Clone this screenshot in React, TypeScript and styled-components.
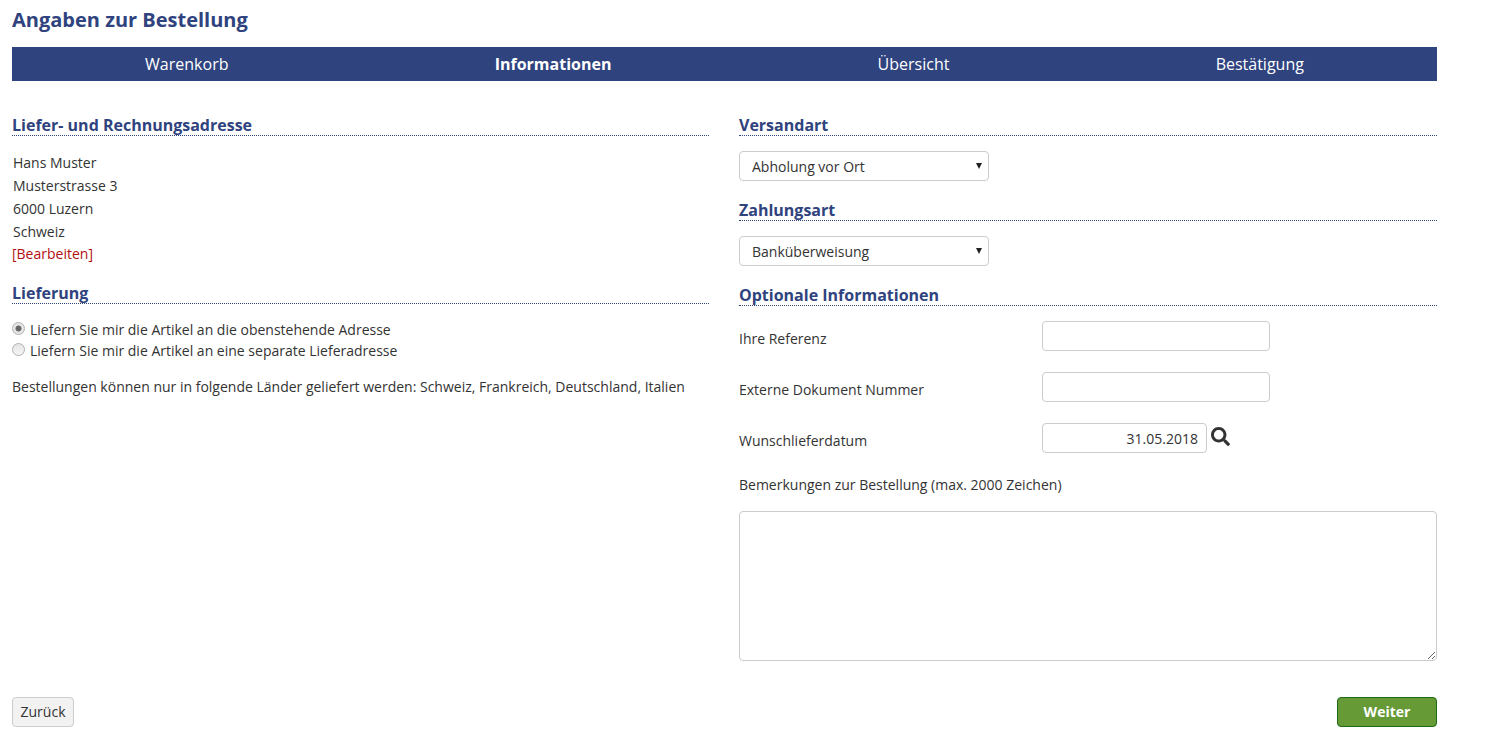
import styled, { createGlobalStyle } from 'styled-components'
import { FaSearch } from 'react-icons/fa'

const GlobalStyle = createGlobalStyle`
    html, body {
        margin: 0;
        padding: 0;
        background: #fff;
    }
    body {
        font-family: "Open Sans", "Liberation Sans", sans-serif;
        font-size: 14px;
        color: #333;
    }
    * {
        box-sizing: border-box;
    }
`

const steps = [
    { label: 'Warenkorb', active: false },
    { label: 'Informationen', active: true },
    { label: 'Übersicht', active: false },
    { label: 'Bestätigung', active: false },
]

function App() {
    return (
        <Page>
            <GlobalStyle />
            <Title>Angaben zur Bestellung</Title>
            <StepBar>
                {steps.map((s) => (
                    <Step key={s.label} $active={s.active}>{s.label}</Step>
                ))}
            </StepBar>
            <Columns>
                <Column>
                    <Heading>Liefer- und Rechnungsadresse</Heading>
                    <Address>
                        <AddressLine>Hans Muster</AddressLine>
                        <AddressLine>Musterstrasse 3</AddressLine>
                        <AddressLine>6000 Luzern</AddressLine>
                        <AddressLine>Schweiz</AddressLine>
                        <EditLink>[Bearbeiten]</EditLink>
                    </Address>
                    <Heading>Lieferung</Heading>
                    <RadioGroup>
                        <RadioRow>
                            <Radio type="radio" name="lieferung" defaultChecked />
                            Liefern Sie mir die Artikel an die obenstehende Adresse
                        </RadioRow>
                        <RadioRow>
                            <Radio type="radio" name="lieferung" />
                            Liefern Sie mir die Artikel an eine separate Lieferadresse
                        </RadioRow>
                    </RadioGroup>
                    <Note>Bestellungen können nur in folgende Länder geliefert werden: Schweiz, Frankreich, Deutschland, Italien</Note>
                </Column>
                <Column>
                    <Heading>Versandart</Heading>
                    <SelectBox>
                        <Select defaultValue="Abholung vor Ort">
                            <option>Abholung vor Ort</option>
                        </Select>
                    </SelectBox>
                    <Heading>Zahlungsart</Heading>
                    <SelectBox>
                        <Select defaultValue="Banküberweisung">
                            <option>Banküberweisung</option>
                        </Select>
                    </SelectBox>
                    <Heading>Optionale Informationen</Heading>
                    <FormRows>
                        <FormRow>
                            <FieldLabel>Ihre Referenz</FieldLabel>
                            <TextInput />
                        </FormRow>
                        <FormRow>
                            <FieldLabel>Externe Dokument Nummer</FieldLabel>
                            <TextInput />
                        </FormRow>
                        <FormRow>
                            <FieldLabel>Wunschlieferdatum</FieldLabel>
                            <DateInput defaultValue="31.05.2018" />
                            <SearchIcon><FaSearch size={19} /></SearchIcon>
                        </FormRow>
                    </FormRows>
                    <RemarkLabel>Bemerkungen zur Bestellung (max. 2000 Zeichen)</RemarkLabel>
                    <Remarks />
                </Column>
            </Columns>
            <Footer>
                <BackButton>Zurück</BackButton>
                <NextButton>Weiter</NextButton>
            </Footer>
        </Page>
    )
}

const Page = styled.div`
    width: 1437px;
    padding-left: 12px;
`
const Title = styled.h1`
    margin: 0;
    height: 47px;
    padding-top: 6px;
    font-size: 20px;
    line-height: 28px;
    font-weight: 700;
    color: #2f437e;
`
const StepBar = styled.nav`
    display: flex;
    height: 34px;
    background: #2f437e;
`
const Step = styled.div<{ $active: boolean }>`
    flex: 1 1 auto;
    text-align: center;
    color: #fff;
    font-size: 16px;
    line-height: 34px;
    font-weight: ${(p) => (p.$active ? 700 : 400)};
`
const Columns = styled.div`
    display: grid;
    grid-template-columns: 697px 698px;
    column-gap: 30px;
    padding-top: 33px;
`
const Column = styled.section`
    display: flex;
    flex-direction: column;
    align-items: flex-start;
`
const Heading = styled.h2`
    align-self: stretch;
    margin: 0;
    height: 22px;
    font-size: 16px;
    line-height: 22px;
    font-weight: 700;
    color: #2f437e;
    border-bottom: 1px dotted #2f437e;
`
const Address = styled.div`
    padding: 15px 0 17px;
`
const AddressLine = styled.div`
    margin-left: 1px;
    height: 23px;
    line-height: 23px;
`
const EditLink = styled.a`
    display: block;
    height: 22px;
    line-height: 22px;
    color: #b30f0f;
`
const RadioGroup = styled.div`
    padding-top: 15px;
`
const RadioRow = styled.label`
    display: flex;
    align-items: center;
    height: 21px;
    line-height: 21px;
`
const Radio = styled.input`
    appearance: none;
    margin: 0 5px 2px 0;
    width: 13px;
    height: 13px;
    border-radius: 50%;
    border: 1px solid #b0b0b0;
    background: linear-gradient(#e4e4e4, #f6f6f6);

    &:checked {
        background: radial-gradient(circle, #666 0, #666 2.6px, #e6e6e6 3.4px);
    }
`
const Note = styled.p`
    margin: 15px 0 0;
    line-height: 21px;
`
const SelectBox = styled.div`
    position: relative;
    width: 250px;
    height: 30px;
    margin: 15px 0 18px;

    &::after {
        content: '';
        position: absolute;
        top: 12px;
        right: 7px;
        border-left: 3.5px solid transparent;
        border-right: 3.5px solid transparent;
        border-top: 6px solid #222;
        pointer-events: none;
    }
`
const Select = styled.select`
    appearance: none;
    display: block;
    width: 100%;
    height: 100%;
    padding: 0 12px;
    border: 1px solid #ccc;
    border-radius: 4px;
    background: #fff;
    font-family: inherit;
    font-size: 14px;
    color: #333;
`
const FormRows = styled.div`
    display: flex;
    flex-direction: column;
    row-gap: 21px;
    padding-top: 15px;
`
const FormRow = styled.div`
    display: flex;
    align-items: center;
    height: 30px;
`
const FieldLabel = styled.label`
    width: 303px;
    padding-top: 4px;
`
const TextInput = styled.input`
    width: 228px;
    height: 30px;
    padding: 0 8px;
    border: 1px solid #ccc;
    border-radius: 4px;
    font-family: inherit;
    font-size: 14px;
    color: #333;
`
const DateInput = styled(TextInput)`
    width: 165px;
    text-align: right;
`
const SearchIcon = styled.span`
    display: flex;
    margin: 0 0 4px 4px;
    color: #333;
`
const RemarkLabel = styled.div`
    margin-top: 21px;
    line-height: 21px;
`
const Remarks = styled.textarea`
    width: 698px;
    height: 150px;
    margin-top: 16px;
    border: 1px solid #ccc;
    border-radius: 4px;
`
const Footer = styled.div`
    display: flex;
    justify-content: space-between;
    padding-top: 36px;
`
const BackButton = styled.button`
    width: 62px;
    height: 30px;
    padding: 0 0 2px;
    border: 1px solid #ccc;
    border-radius: 4px;
    background: #f2f2f2;
    font-family: inherit;
    font-size: 14px;
    color: #333;
`
const NextButton = styled.button`
    width: 100px;
    height: 30px;
    padding: 0 0 2px;
    border: 1px solid #1f6a12;
    border-radius: 4px;
    background: #659a36;
    font-family: inherit;
    font-size: 14px;
    font-weight: 700;
    color: #fff;
`

export default App
